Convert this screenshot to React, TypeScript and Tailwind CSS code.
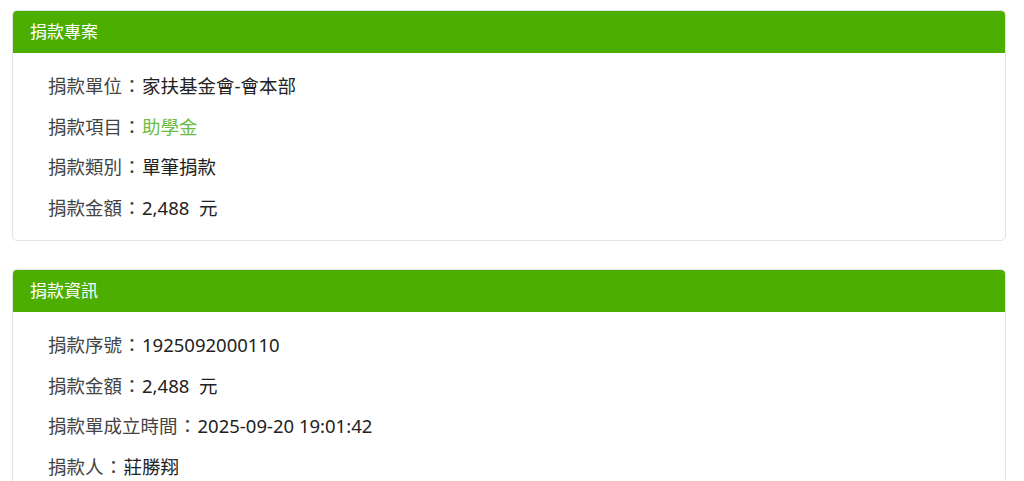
const font = { fontFamily: '"Noto Sans", "Noto Sans CJK TC", sans-serif' }

type Row = { label: string; value: string; accent?: boolean }

const project: Row[] = [
  { label: '捐款單位', value: '家扶基金會-會本部' },
  { label: '捐款項目', value: '助學金', accent: true },
  { label: '捐款類別', value: '單筆捐款' },
  { label: '捐款金額', value: '2,488\u00a0\u00a0元' },
]

const info: Row[] = [
  { label: '捐款序號', value: '1925092000110' },
  { label: '捐款金額', value: '2,488\u00a0\u00a0元' },
  { label: '捐款單成立時間', value: '2025-09-20 19:01:42' },
  { label: '捐款人', value: '莊勝翔' },
]

const Panel = ({ title, rows }: { title: string; rows: Row[] }) => (
  <section className="rounded-[5px] border border-[#e3e3e3] bg-white overflow-hidden">
    <div className="h-[42px] bg-[#4cae00] px-[17px] flex items-center text-[17px] text-white">
      {title}
    </div>
    <div className="px-[35px] pt-[13px] pb-[12px]">
      {rows.map((r) => (
        <div key={r.label} className="h-[40.5px] flex items-center text-[18.5px] text-[#444]">
          <span>{r.label}</span>
          <span className="w-[20px] text-center">：</span>
          <span className={r.accent ? 'text-[#6cbc43]' : 'text-[#222]'}>{r.value}</span>
        </div>
      ))}
    </div>
  </section>
)

export default function App() {
  return (
    <div lang="zh-Hant" className="min-h-screen bg-white" style={font}>
      <div className="pl-[12px] pr-[18px] pt-[10px] flex flex-col gap-[28px]">
        <Panel title="捐款專案" rows={project} />
        <Panel title="捐款資訊" rows={info} />
      </div>
    </div>
  )
}
